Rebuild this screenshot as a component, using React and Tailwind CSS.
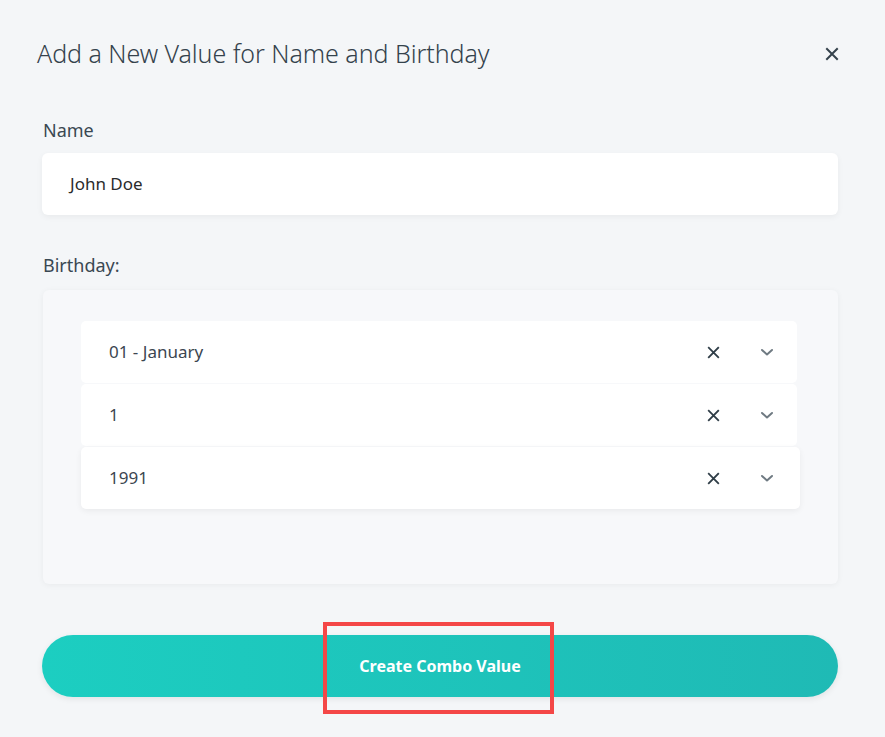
import React from "react";

const XIcon = ({ className = "" }) => (
  <svg viewBox="0 0 14 14" className={className} fill="none" stroke="currentColor" strokeWidth="2" strokeLinecap="square">
    <path d="M2 2l10 10M12 2L2 12" />
  </svg>
);

const Chevron = ({ className = "" }) => (
  <svg viewBox="0 0 14 14" className={className} fill="none" stroke="currentColor" strokeWidth="2" strokeLinecap="round" strokeLinejoin="round">
    <path d="M2 5l5 4.5L12 5" />
  </svg>
);

const rows = [
  { value: "01 - January", wide: false },
  { value: "1", wide: false },
  { value: "1991", wide: true },
];

export default function App() {
  return (
    <div className="min-h-[737px] w-full bg-[#f4f6f8] font-['Noto_Sans',sans-serif] text-[#2f3d47]">
      <div className="pl-[37px] pr-[46px] pt-[38px]">
        <div className="flex items-center justify-between h-[32px]">
          <h1 className="text-[25px] font-light tracking-[-0.05px] text-[#34424c]">Add a New Value for Name and Birthday</h1>
          <XIcon className="w-[14px] h-[14px] text-[#34424c]" />
        </div>
      </div>

      <div className="pl-[42px] pr-[47px] mt-[48px]">
        <label className="block pl-[1px] text-[18px] leading-[24px] text-[#3a4852]">Name</label>
        <div className="mt-[11px] h-[62px] bg-white rounded-[6px] shadow-[0_2px_6px_rgba(0,0,0,0.05)] flex items-center pl-[28px] text-[17px] text-[#2b2b2b]">
          John Doe
        </div>

        <label className="block mt-[38px] pl-[1px] text-[18px] leading-[24px] text-[#3a4852]">Birthday:</label>
        <div className="mt-[13px] ml-[1px] h-[294px] bg-[#f7f8fa] rounded-[6px] shadow-[0_1px_6px_rgba(0,0,0,0.05)] pt-[31px] pl-[38px] pr-[41px]">
          {rows.map((r) => (
            <div
              key={r.value}
              className={`h-[62px] mb-[1px] bg-white rounded-[5px] flex items-center pl-[28px] ${r.wide ? "mr-[-3px] pr-[3px] shadow-[0_2px_6px_rgba(0,0,0,0.06)]" : ""}`}
            >
              <span className="flex-1 text-[17px] text-[#3c4650]">{r.value}</span>
              <XIcon className="w-[13px] h-[13px] text-[#2f3d47] mr-[40px]" />
              <Chevron className="w-[14px] h-[14px] text-[#6f7a82] mr-[23px]" />
            </div>
          ))}
        </div>

        <div className="relative mt-[51px]">
          <button className="w-full h-[62px] rounded-full bg-gradient-to-r from-[#1ccec1] to-[#1fbab5] shadow-[0_2px_6px_rgba(0,0,0,0.08)] text-white font-bold text-[16px]">
            Create Combo Value
          </button>
          <div className="absolute left-[281px] top-[-13px] w-[231px] h-[92px] border-[4px] border-[#f44747] pointer-events-none" />
        </div>
      </div>
    </div>
  );
}
